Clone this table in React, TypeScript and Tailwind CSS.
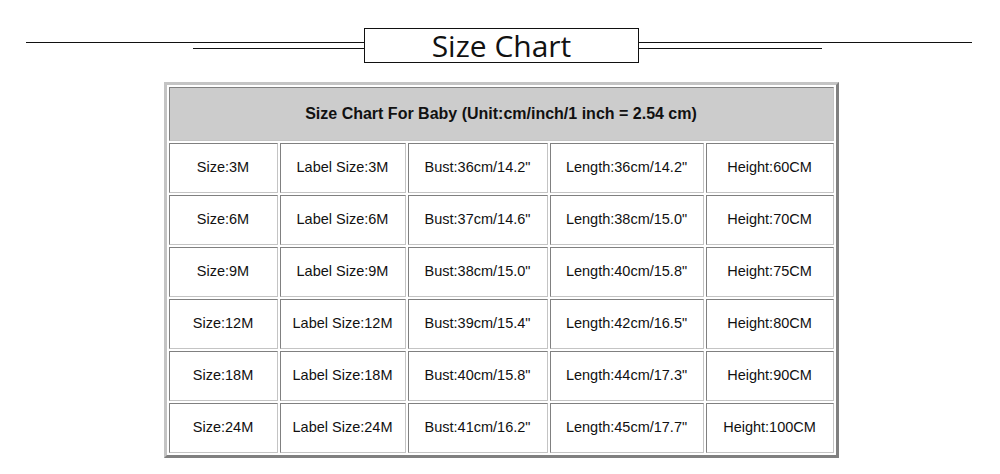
const rows = [
  ["Size:3M", "Label Size:3M", 'Bust:36cm/14.2"', 'Length:36cm/14.2"', "Height:60CM"],
  ["Size:6M", "Label Size:6M", 'Bust:37cm/14.6"', 'Length:38cm/15.0"', "Height:70CM"],
  ["Size:9M", "Label Size:9M", 'Bust:38cm/15.0"', 'Length:40cm/15.8"', "Height:75CM"],
  ["Size:12M", "Label Size:12M", 'Bust:39cm/15.4"', 'Length:42cm/16.5"', "Height:80CM"],
  ["Size:18M", "Label Size:18M", 'Bust:40cm/15.8"', 'Length:44cm/17.3"', "Height:90CM"],
  ["Size:24M", "Label Size:24M", 'Bust:41cm/16.2"', 'Length:45cm/17.7"', "Height:100CM"],
];

const widths = ["w-[109px]", "w-[126px]", "w-[140px]", "w-[154px]", "w-[128px]"];

const cell =
  "border border-t-[#808080] border-l-[#808080] border-r-[#c4c4c4] border-b-[#c4c4c4] text-center align-middle p-0";

export default function App() {
  return (
    <div className="w-[1000px] h-[474px] bg-white font-['Liberation_Sans',Arial,sans-serif] text-[#111]">
      {/* title bar */}
      <div className="flex items-center pt-[28px]">
        <div className="ml-[26px] w-[338px] flex flex-col items-end gap-[5px]">
          <div className="h-px w-full bg-[#111]" />
          <div className="h-px w-[171px] bg-[#111]" />
        </div>
        <div className="w-[275px] h-[35px] border border-[#111] flex items-center justify-center font-['Open_Sans','Noto_Sans',sans-serif] text-[30px] leading-none">
          Size Chart
        </div>
        <div className="w-[333px] flex flex-col items-start gap-[5px]">
          <div className="h-px w-full bg-[#111]" />
          <div className="h-px w-[183px] bg-[#111]" />
        </div>
      </div>

      {/* table */}
      <div className="flex justify-center mt-[19px] pl-[2px]">
        <table className="border-separate border-spacing-[2px] border-[3px] border-t-[#c4c4c4] border-l-[#c4c4c4] border-r-[#808080] border-b-[#808080] text-[14.5px]">
          <tbody>
            <tr>
              <td colSpan={5} className={`${cell} h-[54px] bg-[#cccccc] font-bold text-[16px]`}>
                Size Chart For Baby (Unit:cm/inch/1 inch = 2.54 cm)
              </td>
            </tr>
            {rows.map((r) => (
              <tr key={r[0]}>
                {r.map((c, i) => (
                  <td key={i} className={`${cell} ${widths[i]} h-[50px]`}>
                    {c}
                  </td>
                ))}
              </tr>
            ))}
          </tbody>
        </table>
      </div>
    </div>
  );
}
